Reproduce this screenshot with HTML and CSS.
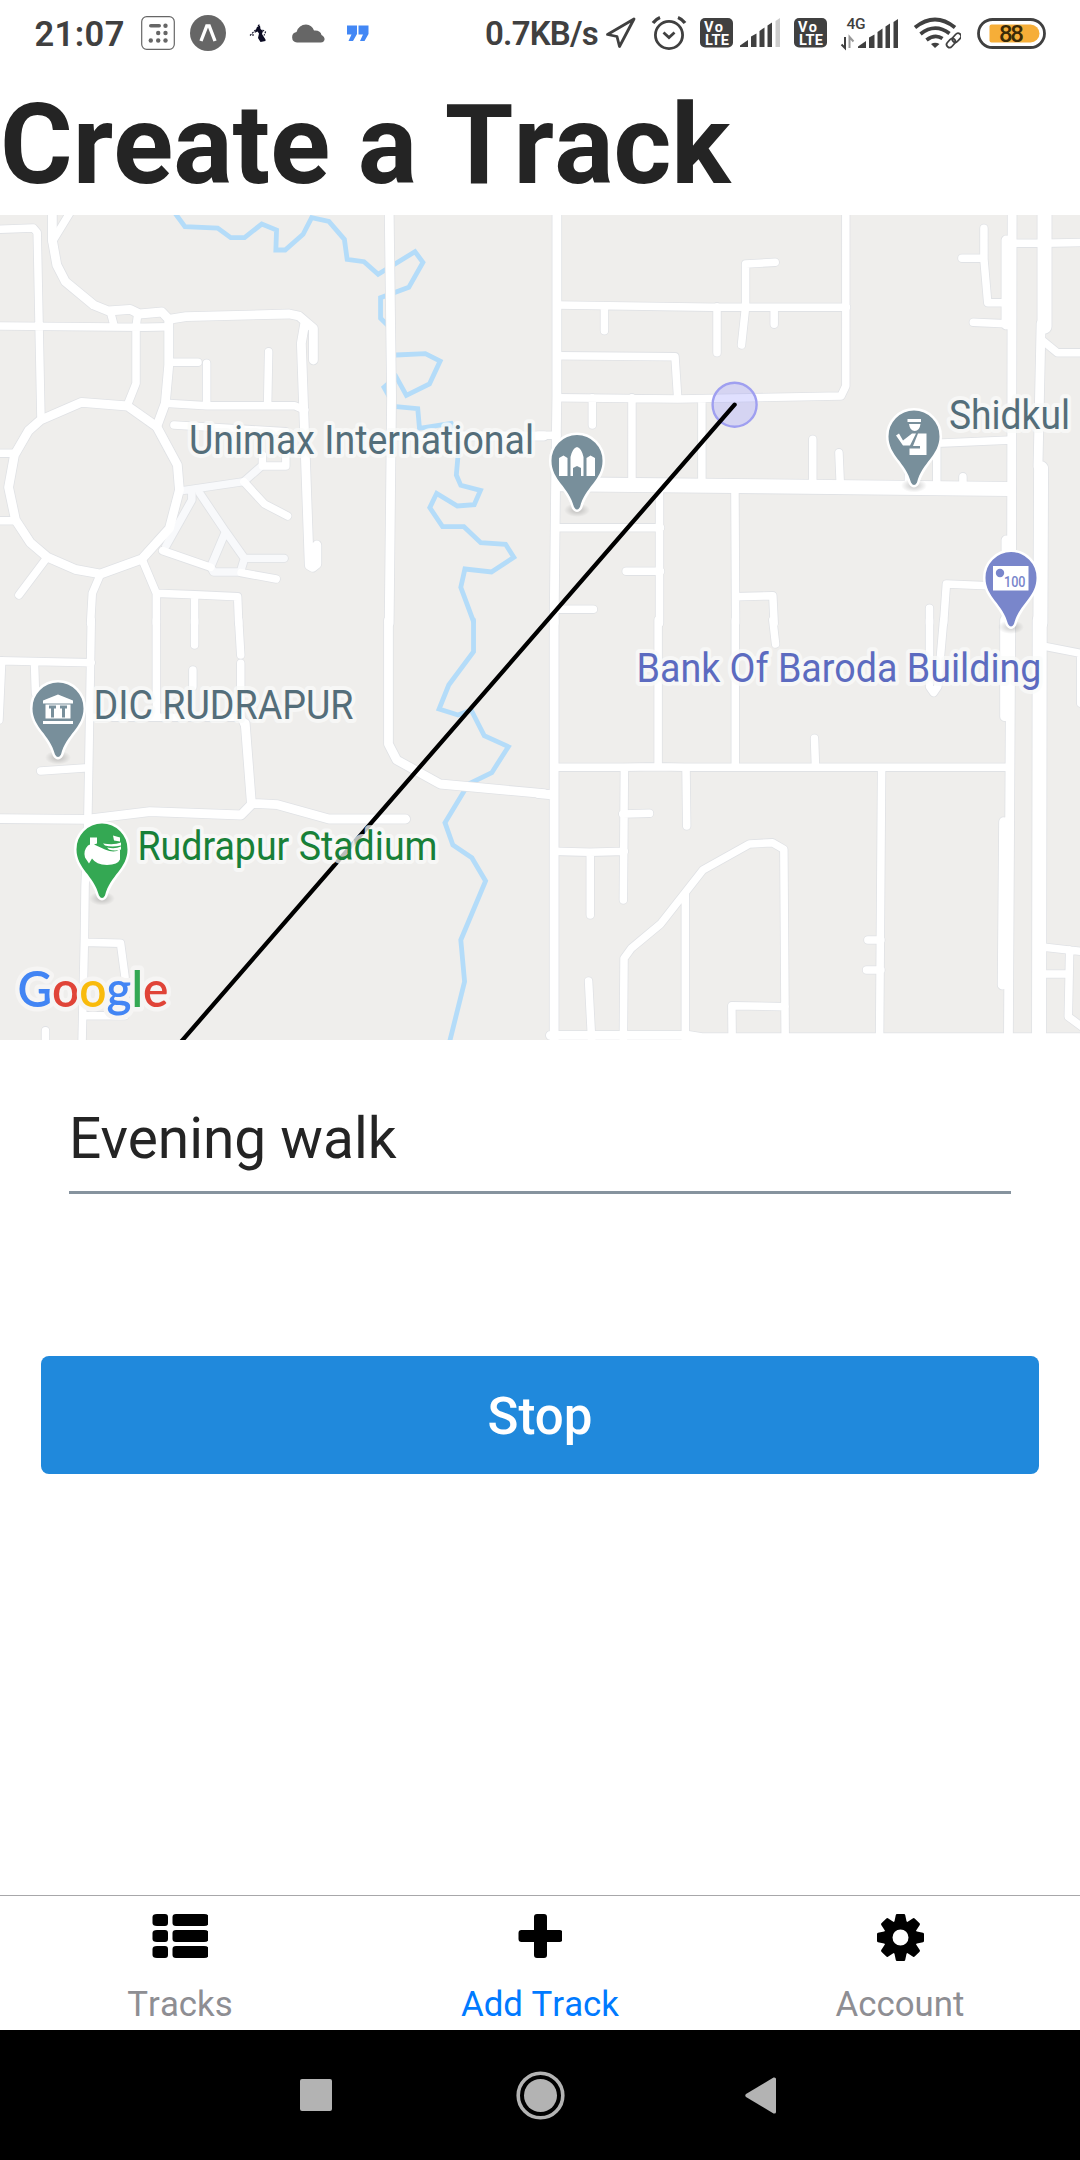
FILE: index.html
```html
<!DOCTYPE html>
<html lang="en">
<head>
<meta charset="utf-8">
<title>Create a Track</title>
<link rel="stylesheet" href="styles.css">
</head>
<body>
<div class="screen">
  <header class="status">
    <div class="status-side">
      <span class="clock">21:07</span>
      <svg class="i-calc" width="34" height="34" viewBox="141 16 34 34">
        <rect x="141.7" y="16.7" width="32.6" height="32.6" rx="5" fill="#fff" stroke="#666" stroke-width="1.2"/>
        <g fill="#666"><rect x="149" y="24" width="12" height="3.6" rx="1.8"/>
        <circle cx="165.500" cy="25.800" r="2.200"/><circle cx="158.200" cy="33" r="2.200"/><circle cx="165.500" cy="33" r="2.200"/><circle cx="150.800" cy="40.500" r="2.200"/><circle cx="158.200" cy="40.500" r="2.200"/><circle cx="165.500" cy="40.500" r="2.200"/></g>
      </svg>
      <svg class="i-expo" width="36" height="36" viewBox="190 15 36 36"><circle cx="208" cy="33" r="18" fill="#666"/><path d="M201 41L206.800 26H209.200L215 41" fill="none" stroke="#fff" stroke-width="3.400"/></svg>
      <svg class="i-bird" width="18" height="20" viewBox="249 23 18 20" fill="#0a0a22"><path d="M257 27L260 25.500L260.500 29L263 31L262 34L265.500 39.500V41L260.500 42L258 38L259 33.500L257.500 31.500L254.500 33L256 29.500Z"/><path d="M250 35.500L256 29.500M253 34V36M258 26L260 24M262.500 30L265.500 32L264 35.500" fill="none" stroke="#0a0a22" stroke-width="1.100" stroke-dasharray="2 1"/></svg>
      <svg class="i-cloud" width="34" height="19" viewBox="291 23 34 19"><path d="M297 41.500A5.300 5.300 0 0 1 296.500 31Q299 23.500 306 23.500Q312 24 314 29.500Q320.500 29 321.500 34Q325 36 324.500 39Q323.500 41.500 321 41.500Z" fill="#666"/></svg>
      <svg class="i-quote" width="22" height="17" viewBox="347 25 22 17" fill="#4287f5"><path id="q" d="M347 25.500H357V34L353 41H348.500L351.500 34.500H347Z"/><use href="#q" x="11.500"/></svg>
    </div>
    <div class="status-side">
      <span class="speed">0.7KB/s</span>
      <svg class="i-loc" width="31" height="32" viewBox="605 18 31 32"><path d="M634 20L607.500 35.500L617 37.500L619.500 47.500Z" fill="none" stroke="#404040" stroke-width="2.800" stroke-linejoin="round"/></svg>
      <svg class="i-alarm" width="36" height="36" viewBox="651 15 36 36" fill="none" stroke="#404040" stroke-width="2.800"><circle cx="669" cy="35" r="13.600"/><path d="M663.500 32.500L669 37.500L674.500 32.500"/><path d="M653 23Q656 19 660 17.500M678 17.500Q682 19 685 23" stroke-width="3.400"/></svg>
      <svg class="i-volte" width="33" height="30" viewBox="0 0 33 30"><g id="volte"><rect width="33" height="29.500" rx="5" fill="#404040"/><g class="volte-text"><text x="4" y="13.500" textLength="19">Vo</text><text x="5" y="26.500" textLength="24">LTE</text></g></g></svg>
      <svg class="i-sig" width="40" height="30" viewBox="0 0 40 30"><g id="sig" fill="#404040"><path d="M0 29V27.500L8 22V29Z"/><path d="M11 29V18.500L16.500 15.500V29Z"/><path d="M19.500 29V13L24.500 9.500V29Z"/><path d="M27.500 29V7.500L32 4.500V29Z"/></g><path d="M35.500 29V3L40 0V29Z" fill="#cdcdcd"/></svg>
      <svg class="i-volte two" width="33" height="30" viewBox="0 0 33 30"><use href="#volte"/></svg>
      <svg class="i-4g" width="58" height="38" viewBox="841 13 58 38"><text class="net" x="846.500" y="28" textLength="19">4G</text><path d="M845 36V47L841.500 43.500" fill="none" stroke="#404040" stroke-width="2"/><path d="M849.500 47V36L853.500 40.500" fill="none" stroke="#999" stroke-width="2"/><g transform="translate(858 18)"><use href="#sig"/><path d="M35.500 29V3L40 0V29Z" fill="#404040"/></g></svg>
      <svg class="i-wifi" width="48" height="32" viewBox="913 17 48 32" fill="none" stroke="#404040"><g stroke-width="3.800"><path d="M915 27.500Q935 11.500 955 27.500"/><path d="M920.500 34Q935 22.500 949.500 33.500"/><path d="M926.500 40Q935 33.500 942.500 38.500"/></g><path d="M931 44Q935 41.500 939.500 44L935 48Z" fill="#404040" stroke="none"/><g stroke-width="1.800"><rect x="-3" y="-6" width="6" height="10" rx="3" transform="translate(956 38.500) rotate(42)"/><rect x="-3" y="-5" width="6" height="10" rx="3" transform="translate(951 43) rotate(42)"/></g></svg>
      <svg class="i-batt" width="69" height="31" viewBox="976.500 17.500 69 31"><rect x="978" y="19" width="66" height="28" rx="14" fill="#fff" stroke="#404040" stroke-width="2.800"/><path d="M991 24H1030A9 9 0 0 1 1030 42H991Q989 42 989 40V26Q989 24 991 24Z" fill="#f6ae38"/><text class="pct" x="998.500" y="41.800" textLength="25">88</text></svg>
    </div>
  </header>
  <h1 class="title">Create a Track</h1>

  <svg class="map" width="1080" height="825" viewBox="0 215 1080 825">
    <defs>
      <g id="roads">
        <g transform="translate(0 210) scale(.34439 .33333)">
          <g class="road"><path d="M0 58L97 54L108 68L119 628M0 348L420 352L490 350M205 5L152 95M320 303L332 350M400 312L395 350V520L370 585M490 457H575M600 460V585M780 425L777 585M480 580L600 587H855L885 600M0 730H40M0 932H45M135 1045L55 1155M292 1092L268 1150L263 1240M412 1047L454 1150V1240M454 1150L565 1154L690 1160L693 1240M565 1154V1240M505 645L830 665V768H762V735M708 815L768 882L835 918M472 1022L612 1072M700 1088L802 1107"/></g>
          <g class="road street"><path d="M152 5V90L165 165L190 215L272 285L315 303L378 298L405 312L470 306L490 328L540 320L840 312L868 318L910 355V450M490 328V465L480 580L455 650M885 340L875 400L898 1066L908 1072L920 1062V1005"/><path d="M118 630L237 577L370 588L455 650L515 765L521 840L492 955L412 1047L292 1092L218 1078L138 1042L88 998L45 930L25 832L42 735L83 662Z"/><path d="M1130 5L1137 560L1130 1240M1140 678H1580"/></g>
        </g>
        <g transform="translate(540 210) scale(.34439 .33333)">
          <g class="road"><path d="M49 285L500 292H890M187 290V362M514 290V428M597 285V162L683 157M597 290L585 405M680 292V343M888 5V528L874 558L400 567L50 563M50 437L392 440L400 567M152 563V645M267 563V815M470 567V820M-5 676H49M792 815V688M868 728L872 825M1070 790V830M1152 830V700L1370 690M1228 800V830M347 830V1240M45 953H350M566 840L568 1240M568 1160L676 1157L680 1240M250 1084H350M45 1198H155M1131 1195V1240M1172 1240L1180 1122L1300 1127M1370 100H1462L1580 97M1455 388L1502 428H1580M1289 55V147L1300 278H1345M1225 145H1289M1258 337L1350 341"/></g>
          <g class="road street"><path d="M49 5V560L45 850L41 1240M1371 5L1369 1240M1353 90V345M1353 990V1240M1455 340L1446 770"/></g>
          <g class="road avenue"><path d="M60 823L200 824L640 829L1362 837M1465 5V350M1455 775L1453 1240"/></g>
        </g>
        <g transform="translate(0 620) scale(.34439 .33333)">
          <g class="road"><path d="M-10 122L265 128M5 122L-3 300M100 125L103 220M265 0L255 600L247 800L245 960L238 1280M118 453L255 443M454 0V292M565 0V75M560 150V200M693 0L699 105M699 130V290L712 320M265 292H700M245 967L350 970L363 1070V1187H245M132 1232V1280"/></g>
          <g class="road street"><path d="M712 310L730 550M-10 596L250 598L435 575L700 585L733 550L806 554L955 597H1178M1128 0V372L1152 420L1278 492L1580 521"/></g>
        </g>
        <g transform="translate(540 620) scale(.34439 .33333)">
          <g class="road"><path d="M343 0V440M567 0V440M676 0L684 72M41 442H240L340 440L420 442H1365M797 355L800 442M1131 0V200L1143 218L1155 200L1172 0M245 442L242 840M240 582L318 580M424 442L426 618M41 694L145 697L245 694M146 697V885M141 1083L150 1260M242 1260L244 1015L265 985L350 912L473 750L608 672L675 668L708 688L712 1260M422 820V1260M712 1160L557 1157L558 1260M992 442L986 1260M952 960H990M948 1050H990M1470 80L1580 102M1570 110V250M1465 982L1580 995M1538 990L1534 1190L1580 1225M1465 1062H1534"/></g>
          <g class="road street"><path d="M41 0V1280M-5 521L41 525M1367 0L1360 1280M1349 0V290M1346 605L1342 1095M30 1246H430L470 1253H1580"/></g>
          <g class="road avenue"><path d="M1451 0L1449 1280"/></g>
        </g>
      </g>
      <path id="lanes" d="M755 772L708 815L530 842M557 842V870L482 1008M580 850L655 965L710 1045H825M655 965L612 1070L620 1086H698L710 1045"/>
      <radialGradient id="shade"><stop offset="0" stop-opacity=".22"/><stop offset="1" stop-opacity="0"/></radialGradient>
      <g id="pin">
        <ellipse cx="0" cy="75" rx="13" ry="7" fill="url(#shade)"/>
        <path d="M0 0A25.500 25.500 0 0 1 25.500 26C25.500 45 8 52 3 72Q0 77 -3 72C-8 52 -25.500 45 -25.500 26A25.500 25.500 0 0 1 0 0Z" stroke="#fff" stroke-width="5" stroke-linejoin="round" paint-order="stroke"/>
      </g>
    </defs>
    <rect y="215" width="1080" height="825" fill="#efeeec"/>
    <g class="river">
      <path transform="translate(0 210) scale(.34439 .33333)" d="M505 5L537 50L632 54L670 83H710L760 42L803 60L801 120H828L880 73L905 23L955 34L1000 88L1008 148L1057 155L1098 193L1205 125L1228 157L1187 232L1105 263V325L1130 350M1150 435L1235 431L1278 453L1247 522L1180 556L1150 500L1115 532L1130 560M1150 590L1213 596L1218 655L1310 640L1334 690L1325 795L1338 826L1395 841L1377 884L1328 888L1268 850L1248 893L1285 950H1347L1396 998L1468 1003L1492 1042L1427 1086L1350 1077L1338 1132L1375 1235"/>
      <path transform="translate(0 620) scale(.34439 .33333)" d="M1375 0V95L1303 195L1275 267L1330 285L1368 270L1406 347L1476 380L1428 458L1360 492L1292 608L1315 675L1370 713L1410 783L1338 960L1349 1085L1302 1280"/>
    </g>
    <g class="lane edge" transform="translate(0 210) scale(.34439 .33333)"><use href="#lanes"/></g>
    <g class="casing"><use href="#roads"/></g>
    <g class="lane" transform="translate(0 210) scale(.34439 .33333)"><use href="#lanes"/></g>
    <g class="surface"><use href="#roads"/></g>
    <circle cx="734.600" cy="404.700" r="22" fill="rgba(158,158,255,.32)" stroke="#9f9ff0" stroke-width="2.400"/>
    <path d="M734.600 404.700L180 1043" stroke="#000" stroke-width="4.300" stroke-linecap="round"/>

    <g fill="#788f9b">
      <g transform="translate(577 435)"><use href="#pin"/><path fill="#fff" d="M-6.500 41V22Q-4.500 13 0 12Q4.500 13 6.500 22V41H4V33L0 31L-4 33V41ZM-18 41V23L-13.500 20.500L-9.500 23V41ZM18 41V23L13.500 20.500L9.500 23V41Z"/></g>
      <g transform="translate(914 410.500)"><use href="#pin"/><path fill="#fff" d="M-6.500 8.500H7V11.500H-6.500ZM-5 13.500H6.500Q5.500 20.500 .8 20.500Q-4 20.500 -5 13.500ZM4 23H12.500V44.500H-4.500V38H6V35.500H-1ZM-18 25L-15 23L-11 30L-2 23H2L-4 35H-11Z"/></g>
      <g transform="translate(58 682.500)"><use href="#pin"/><path fill="#fff" d="M0 12L15 18V21H-15V18ZM-12.500 22H12.500V36H-12.500ZM-15 38.500H15V41.500H-15Z"/><path d="M-9 23H-2V26H-4V35H-7V26H-9ZM2 23H9V26H7V35H4V26H2Z"/></g>
    </g>
    <g transform="translate(1011 552)" fill="#7986cb"><use href="#pin"/><path fill="#fff" d="M-18 14H17.500V38.500H-18Z"/><circle cx="-11" cy="21" r="4.200"/><text class="note" x="-7" y="34.500" textLength="21.500" lengthAdjust="spacingAndGlyphs">100</text></g>
    <g transform="translate(102 823.500)" fill="#34a853"><use href="#pin"/><path fill="#fff" d="M-12 14H-5V20L-8 21L3 26Q12 30 18 26V36Q16 41 5 41.500Q-6 41 -10 35L-13 40L-17 34Q-19 27 -14 22L-12 21ZM11 12L18 14V18L12 17ZM1 20Q12 22 19 19V22Q10 24 3 22ZM5 24Q13 26 19 23V26Q13 28 7 26Z"/></g>

    <g class="place">
      <text x="189" y="453.700" textLength="345" lengthAdjust="spacingAndGlyphs">Unimax International</text>
      <text x="93.500" y="718.500" textLength="260" lengthAdjust="spacingAndGlyphs">DIC RUDRAPUR</text>
      <text x="949" y="428.500" textLength="121" lengthAdjust="spacingAndGlyphs">Shidkul</text>
      <text class="park" x="137.500" y="859.500" textLength="300" lengthAdjust="spacingAndGlyphs">Rudrapur Stadium</text>
      <text class="bank" x="636.500" y="682" textLength="405" lengthAdjust="spacingAndGlyphs">Bank Of Baroda Building</text>
    </g>
    <text class="google" x="17.500" y="1007" textLength="151" lengthAdjust="spacingAndGlyphs"><tspan fill="#4285f4">G</tspan><tspan fill="#e04438">o</tspan><tspan fill="#f9bb0c">o</tspan><tspan fill="#4285f4">g</tspan><tspan fill="#34a853">l</tspan><tspan fill="#e04438">e</tspan></text>
  </svg>

  <main class="form">
    <div class="field">Evening walk</div>
    <button class="stop">Stop</button>
  </main>

  <nav class="tabs">
    <a class="tab"><svg width="56" height="48" viewBox="152 1912 56 48"><path d="M157 1913h8q3 0 3 3v6q0 3-3 3h-8q-4.500 0-4.500-3v-6q0-3 4.500-3zM176 1913h28q4.500 0 4.500 3v6q0 3-4.500 3h-28q-3.500 0-3.500-3v-6q0-3 3.500-3z" id="row"/><use href="#row" y="16"/><use href="#row" y="32"/></svg><span>Tracks</span></a>
    <a class="tab active"><svg width="44" height="48" viewBox="518 1912 44 48"><path d="M537 1913h7q3 0 3 3v13h12.500q3 0 3 3v6q0 3-3 3H547v13q0 3-3 3h-7q-3 0-3-3v-13h-12.500q-3 0-3-3v-6q0-3 3-3H534v-13q0-3 3-3z"/></svg><span>Add Track</span></a>
    <a class="tab"><svg width="48" height="48" viewBox="-24.500 -24.500 48 48"><circle r="12.500" fill="none" stroke="#000" stroke-width="9"/><g id="t2"><g id="t1"><path id="tooth" d="M-6.500-14L-4.700-22.500Q-4.500-23.500-3.500-23.500H3.500Q4.500-23.500 4.700-22.500L6.500-14ZM-6.500 14L-4.700 22.500Q-4.500 23.500-3.500 23.500H3.500Q4.500 23.500 4.700 22.500L6.500 14Z"/><use href="#tooth" transform="rotate(90)"/></g><use href="#t1" transform="rotate(45)"/></g></svg><span>Account</span></a>
  </nav>

  <footer class="sysnav">
    <svg width="32" height="32"><rect width="32" height="32" rx="2"/></svg>
    <svg width="49" height="49" viewBox="-24.500 -24.500 49 49"><circle r="22.300" fill="none" stroke="#b3b3b3" stroke-width="3.600"/><circle r="16.500"/></svg>
    <svg width="32" height="37"><path d="M1 17Q-.5 18.500 1 20L28.500 36.500Q31 37 31 35V2Q31 0 28.500 .500Z"/></svg>
  </footer>
</div>
</body>
</html>
```
FILE: styles.css
```css
* { box-sizing: border-box; }
body { margin: 0; background: #fff; font-family: Roboto, "Liberation Sans", sans-serif; }
svg { display: block; flex: none; }

.screen { width: 1080px; height: 2160px; display: flex; flex-direction: column; background: #fff; overflow: hidden; }

.status { height: 68px; flex: none; display: flex; justify-content: space-between; padding: 0 34.5px 2px 34.5px; color: #404040; }
.status-side { display: flex; align-items: center; }
.clock { width: 106.5px; font-size: 34.5px; font-weight: 600; letter-spacing: .4px; white-space: nowrap; padding-top: 2px; }
.speed { width: 120px; font-size: 33px; font-weight: 600; letter-spacing: -.8px; white-space: nowrap; padding-top: 1px; }
.i-expo { margin-left: 15px; }
.i-bird { margin-left: 23px; }
.i-cloud { margin-left: 24px; }
.i-quote { margin-left: 22px; }
.i-alarm { margin-left: 15px; }
.i-volte { margin-left: 13px; }
.i-volte.two { margin-left: 14px; }
.i-sig { margin-left: 7px; }
.i-4g { margin-left: 14px; overflow: visible; }
.i-wifi { margin-left: 14px; }
.i-batt { margin-left: 15.5px; }
.volte-text { fill: #fff; font-size: 14.5px; font-weight: 700; }
.net { fill: #404040; font-size: 15.5px; font-weight: 500; }
.pct { fill: #3a2a08; font-size: 24px; font-weight: 500; }

.title { margin: 0; height: 147px; flex: none; font-size: 111px; font-weight: 700; font-kerning: none; line-height: 129px; padding-top: 13px; color: #242424; white-space: nowrap; }

.map { overflow: hidden; }
.road { --w: 7.5px; }
.road.street { --w: 8.8px; }
.road.avenue { --w: 14px; }
.casing, .surface, .lane, .river { fill: none; stroke-linejoin: round; stroke-linecap: round; }
.casing { stroke: #e0e2e5; --edge: 1.6px; }
.surface { stroke: #fff; --edge: 0px; }
.road path { vector-effect: non-scaling-stroke; stroke-width: calc(var(--w) + var(--edge)); }
.lane { stroke: #f8f9fb; stroke-width: 22px; }
.lane.edge { stroke: #e0e2e5; stroke-width: 27px; }
.river path { stroke: #b4dcf9; stroke-width: 4.8px; vector-effect: non-scaling-stroke; stroke-linejoin: miter; }
.place text { font-size: 39.8px; fill: #546e7a; stroke: rgba(250, 251, 250, .75); stroke-width: 8px; paint-order: stroke; stroke-linejoin: round; }
.place .park { fill: #188038; }
.place .bank { fill: #5c6bc0; }
.note { font-size: 14.5px; font-weight: 500; }
.google { font-family: Lato, sans-serif; font-size: 50px; font-weight: 600; stroke: #f6f5f4; stroke-width: 9px; paint-order: stroke; stroke-linejoin: round; }

.form { flex: 1; padding: 55px 41px 0; display: flex; flex-direction: column; gap: 162px; }
.field { margin: 0 28px; height: 99px; padding-top: 10px; border-bottom: 3px solid #86939e; font-size: 56.8px; line-height: 67px; color: #242424; }
.stop { height: 118px; border: 0; border-radius: 8px; background: #2089dc; color: #fff; font: 500 51px/118px Roboto, sans-serif; padding: 2px 0 0; }

.tabs { height: 135px; flex: none; display: flex; border-top: 1px solid #a7a7aa; }
.tab { flex: 1; display: flex; flex-direction: column; align-items: center; padding-top: 17px; color: #8e8e93; font-size: 34.8px; font-kerning: none; line-height: 42px; }
.tab span { margin-top: 22px; }
.tab.active { color: #007aff; }

.sysnav { height: 130px; flex: none; background: #000; fill: #b3b3b3; display: flex; align-items: center; padding-left: 300px; }
.sysnav svg + svg { margin-left: 184px; }
.sysnav svg:last-child { margin-left: 180px; }
```
